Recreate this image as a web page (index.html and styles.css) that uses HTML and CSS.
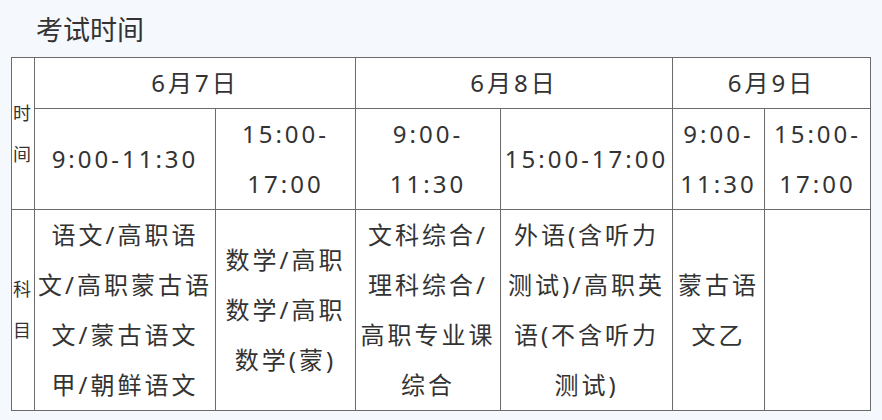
FILE: index.html
```html
<!DOCTYPE html>
<html lang="zh-CN">
<head>
<meta charset="utf-8">
<title>考试时间</title>
<link rel="stylesheet" href="styles.css">
</head>
<body>
<div class="page">
  <h2 class="title">考试时间</h2>
  <table class="exam">
    <colgroup>
      <col class="c-label">
      <col class="c1">
      <col class="c2">
      <col class="c3">
      <col class="c4">
      <col class="c5">
      <col class="c6">
    </colgroup>
    <tbody>
      <tr class="r-date">
        <td class="label" rowspan="2">时<br>间</td>
        <td colspan="2">6月7日</td>
        <td colspan="2">6月8日</td>
        <td colspan="2">6月9日</td>
      </tr>
      <tr class="r-time">
        <td>9:00-11:30</td>
        <td>15:00-<br>17:00</td>
        <td>9:00-<br>11:30</td>
        <td>15:00-17:00</td>
        <td>9:00-<br>11:30</td>
        <td>15:00-<br>17:00</td>
      </tr>
      <tr class="r-subj">
        <td class="label">科<br>目</td>
        <td>语文/高职语<br>文/高职蒙古语<br>文/蒙古语文<br>甲/朝鲜语文</td>
        <td>数学/高职<br>数学/高职<br>数学(蒙)</td>
        <td>文科综合/<br>理科综合/<br>高职专业课<br>综合</td>
        <td>外语(含听力<br>测试)/高职英<br>语(不含听力<br>测试)</td>
        <td>蒙古语<br>文乙</td>
        <td></td>
      </tr>
    </tbody>
  </table>
</div>
</body>
</html>
```

FILE: styles.css
```css
html, body {
  margin: 0;
  padding: 0;
  background: #f5f8fd;
}

body {
  font-family: "Noto Sans", "Noto Sans CJK SC", sans-serif;
  color: #333333;
}

.page {
  padding: 12px 0 0 11px;
}

.title {
  margin: 0 0 9px 0;
  padding-left: 25px;
  font-size: 27px;
  line-height: 36px;
  font-weight: normal;
  color: #333333;
}

.exam {
  border-collapse: collapse;
  table-layout: fixed;
  width: 860px;
  background: #ffffff;
}

.c-label { width: 23px; }
.c1 { width: 181px; }
.c2 { width: 140px; }
.c3 { width: 145px; }
.c4 { width: 172px; }
.c5 { width: 92px; }
.c6 { width: 106px; }

.exam td {
  border: 1px solid #6b6b6b;
  padding: 0;
  text-align: center;
  vertical-align: middle;
  font-size: 24px;
  line-height: 50px;
  letter-spacing: 3px;
  white-space: normal;
}

.exam td.label {
  font-size: 18px;
  line-height: 41px;
  letter-spacing: 3px;
  text-align: left;
  padding-left: 1px;
}

.r-date td { height: 50px; }
.r-time td { height: 100px; }
.r-subj td { height: 200px; }
```
